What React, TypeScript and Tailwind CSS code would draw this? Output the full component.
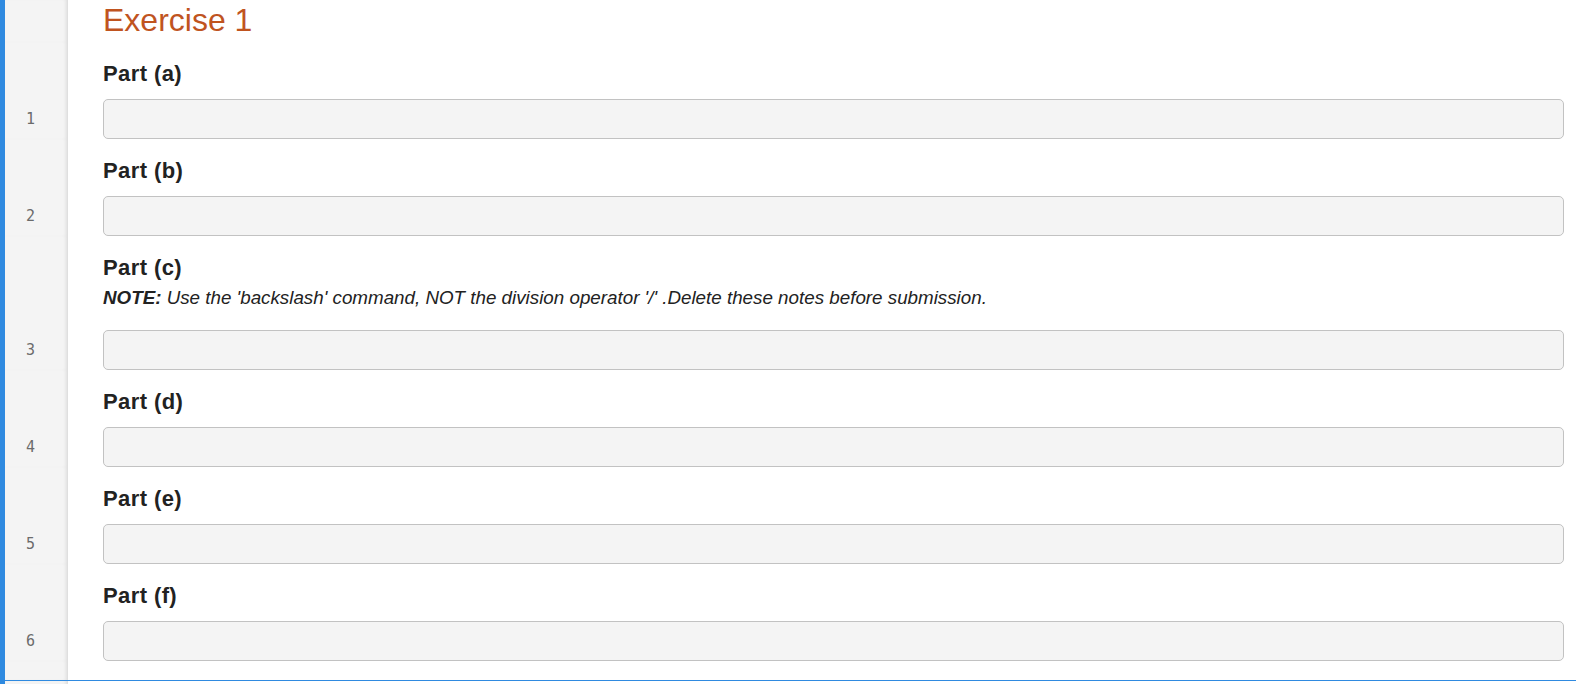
import React from "react";

/* ── Parts of the exercise ─────────────────────────────── */

const PARTS = [
  { n: 1, label: "Part (a)" },
  { n: 2, label: "Part (b)" },
  { n: 3, label: "Part (c)", note: true },
  { n: 4, label: "Part (d)" },
  { n: 5, label: "Part (e)" },
  { n: 6, label: "Part (f)" },
];

function Gutter({ children }: { children?: React.ReactNode }) {
  return (
    <div className="flex w-[63px] shrink-0 flex-col justify-end bg-[#f4f4f4] shadow-[inset_-4px_0_4px_-3px_rgba(0,0,0,0.14)]">
      {children}
    </div>
  );
}

function PartRow({ n, label, note }: { n: number; label: string; note?: boolean }) {
  return (
    <div className="flex">
      <Gutter>
        <div className="flex h-[40px] items-center pl-[21px] font-['DejaVu_Sans_Mono',monospace] text-[15px] text-[#6b6b6b]">
          {n}
        </div>
      </Gutter>
      <div className="flex-1 pl-[35px] pr-[12px] pt-[19px]">
        <div className="text-[22px] font-bold leading-[26px] tracking-[0.4px] text-[#222]">
          {label}
        </div>
        {note ? (
          <div className="mt-[6px] mb-[21px] text-[18.8px] italic leading-[22px] text-[#222]">
            <b>NOTE:</b> Use the 'backslash' command, NOT the division operator '/' .Delete these
            notes before submission.
          </div>
        ) : (
          <div className="h-[12px]" />
        )}
        <input
          type="text"
          className="block h-[40px] w-full rounded-[5px] border border-[#c2c2c2] bg-[#f4f4f4] px-3 outline-none"
        />
      </div>
    </div>
  );
}

export default function App() {
  return (
    <div className="flex h-[684px] w-full overflow-hidden bg-white font-['Liberation_Sans',Arial,sans-serif]">
      <div className="w-[5px] shrink-0 bg-[#2f8ae0]" />
      <div className="flex flex-1 flex-col">
        <div className="flex h-[681px] flex-col border-b border-[#2f8ae0]">
          {/* Heading */}
          <div className="flex">
            <Gutter />
            <div className="h-[42px] flex-1 pl-[35px]">
              <h1 className="text-[32px] leading-[40px] text-[#c0541f]">Exercise 1</h1>
            </div>
          </div>

          {PARTS.map((p) => (
            <PartRow key={p.n} n={p.n} label={p.label} note={p.note} />
          ))}

          <div className="flex flex-1">
            <Gutter />
            <div className="flex-1" />
          </div>
        </div>
        <div className="flex h-[3px]">
          <Gutter />
          <div className="flex-1" />
        </div>
      </div>
    </div>
  );
}
